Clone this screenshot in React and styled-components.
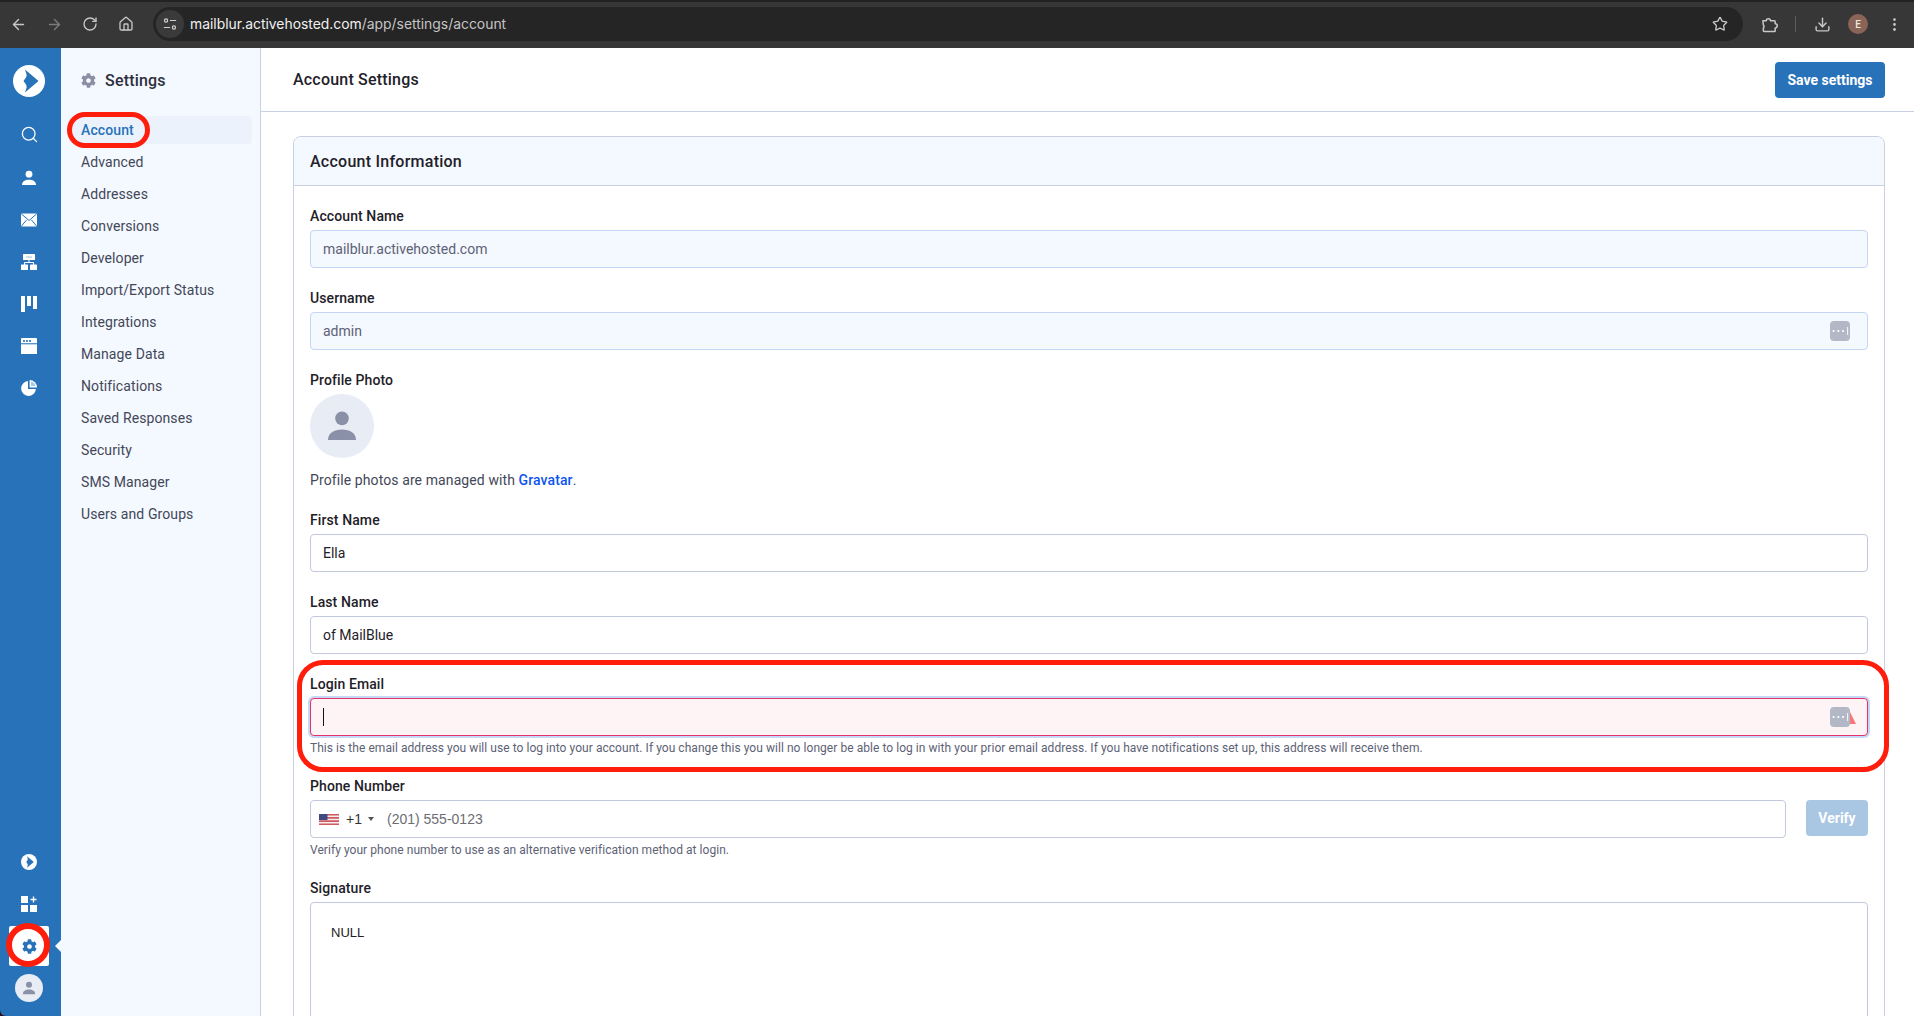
import React from 'react';
import styled, { createGlobalStyle } from 'styled-components';
import { ArrowLeft, ArrowRight, RotateCw, Home, Star, Download, EllipsisVertical, Search } from 'lucide-react';
import { FaCog } from 'react-icons/fa';

const GlobalStyle = createGlobalStyle`
  * { box-sizing: border-box; }
  html, body { margin: 0; padding: 0; height: 100%; overflow: hidden; }
  body { font-family: "Roboto", "Liberation Sans", sans-serif; color: #1f2129; background: #fff; }
`;

const Page = styled.div`
  height: 1016px;
  display: flex;
  flex-direction: column;
  overflow: hidden;
  background: #2a0d16;
`;

const Toolbar = styled.div`
  height: 48px;
  flex-shrink: 0;
  display: flex;
  align-items: center;
  padding-bottom: 2px;
  background: #373737;
  border-top: 2px solid #222;
  color: #c7c7c7;
`;

const ToolSlot = styled.div`
  width: ${p => p.w || 36}px;
  height: 32px;
  display: flex;
  align-items: center;
  justify-content: center;
  flex-shrink: 0;
  color: ${p => (p.dim ? '#7c7c7c' : '#c7c7c7')};
`;

const AddressBar = styled.div`
  width: 1590px;
  height: 34px;
  margin-left: 9px;
  margin-right: 8px;
  border-radius: 17px;
  background: #252525;
  display: flex;
  align-items: center;
  padding: 0 15px 0 3px;
  flex-shrink: 0;
`;

const SiteChip = styled.div`
  width: 28px;
  height: 28px;
  border-radius: 50%;
  background: #3a3a3a;
  display: flex;
  align-items: center;
  justify-content: center;
  margin-right: 6px;
`;

const Url = styled.div`
  flex: 1;
  font-family: "Inter", sans-serif;
  font-size: 13.9px;
  color: #c4c4c4;
  span { color: #f1f1f1; }
`;

const ToolDivider = styled.div`
  width: 1px;
  height: 16px;
  background: #5c5c5c;
  margin: 0 8px;
`;

const ProfileDot = styled.div`
  width: 20px;
  height: 20px;
  border-radius: 50%;
  background: #8a6557;
  color: #efe7e3;
  font-size: 10px;
  font-weight: 500;
  display: flex;
  align-items: center;
  justify-content: center;
`;

const Body = styled.div`
  flex: 1;
  min-height: 0;
  display: flex;
`;

const Rail = styled.nav`
  width: 61px;
  flex-shrink: 0;
  background: #2772b8;
  border-bottom-left-radius: 6px;
  display: flex;
  flex-direction: column;
  align-items: center;
  padding: 17px 0 14px;
`;

const RailLogo = styled.div`
  width: 32px;
  height: 32px;
  margin-bottom: 18px;
  margin-right: 3px;
`;

const RailSlot = styled.div`
  height: 42px;
  width: 100%;
  display: flex;
  align-items: center;
  justify-content: center;
  color: #fff;
  padding-right: 3px;
`;

const SearchSlot = styled(RailSlot)`
  padding-bottom: 3px;
`;

const RailBottom = styled.div`
  margin-top: auto;
  width: 100%;
  display: flex;
  flex-direction: column;
  align-items: center;
`;

const GearBox = styled.div`
  position: relative;
  width: 40px;
  height: 40px;
  margin-top: 1px;
  margin-left: -3px;
  border-radius: 2px;
  background: #fff;
  color: #2772b8;
  display: flex;
  align-items: center;
  justify-content: center;
`;

const GearPointer = styled.div`
  position: absolute;
  left: 46px;
  top: 14px;
  width: 0;
  height: 0;
  border-top: 6px solid transparent;
  border-bottom: 6px solid transparent;
  border-right: 6px solid #f4f8ff;
`;

const GearRing = styled.div`
  position: absolute;
  left: -3px;
  top: -3px;
  width: 44px;
  height: 44px;
  border-radius: 50%;
  border: 6.5px solid #ff1d0c;
`;

const RailAvatar = styled.div`
  width: 28px;
  height: 28px;
  border-radius: 50%;
  margin-top: 8px;
  margin-right: 3px;
  background: #e8ecf5;
  display: flex;
  align-items: center;
  justify-content: center;
`;

const SubNav = styled.aside`
  width: 200px;
  flex-shrink: 0;
  background: #f4f8ff;
  border-right: 1px solid #c9d0e3;
  padding: 0 8px;
`;

const SubNavHead = styled.div`
  height: 64px;
  margin-bottom: 4px;
  padding-left: 12px;
  display: flex;
  align-items: center;
  gap: 9px;
  font-size: 16px;
  font-weight: 500;
  letter-spacing: 0.2px;
  color: #2d303b;
  svg { color: #8a90a3; }
`;

const NavList = styled.div`
  display: flex;
  flex-direction: column;
  gap: 4px;
`;

const NavItem = styled.div`
  position: relative;
  height: 28px;
  padding-left: 12px;
  border-radius: 4px;
  display: flex;
  align-items: center;
  font-size: 14px;
  letter-spacing: 0.1px;
  color: ${p => (p.active ? '#2772b8' : '#434757')};
  font-weight: ${p => (p.active ? 500 : 400)};
  background: ${p => (p.active ? '#ecf2fc' : 'transparent')};
`;

const NavRing = styled.div`
  position: absolute;
  left: -2px;
  top: -4px;
  width: 83px;
  height: 36px;
  border: 5px solid #ff1d0c;
  border-radius: 18px;
`;

const Main = styled.main`
  flex: 1;
  min-width: 0;
  background: #fff;
`;

const MainHead = styled.header`
  height: 64px;
  padding: 0 29px 0 32px;
  border-bottom: 1px solid #c9d0e3;
  display: flex;
  align-items: center;
  justify-content: space-between;
  font-size: 16px;
  font-weight: 500;
  letter-spacing: 0.2px;
  color: #1f2129;
`;

const SaveButton = styled.button`
  width: 110px;
  height: 36px;
  border: none;
  border-radius: 4px;
  background: #2772b8;
  color: #fff;
  font-family: inherit;
  font-size: 14px;
  font-weight: 700;
  margin-top: 1px;
`;

const Content = styled.div`
  padding: 24px 29px 0 32px;
`;

const Card = styled.section`
  border: 1px solid #c9d0e3;
  border-radius: 8px;
`;

const CardHead = styled.div`
  height: 49px;
  padding: 0 16px;
  background: #f4f8ff;
  border-bottom: 1px solid #c9d0e3;
  border-radius: 8px 8px 0 0;
  display: flex;
  align-items: center;
  font-size: 16px;
  font-weight: 500;
  letter-spacing: 0.25px;
  color: #1f2129;
`;

const CardBody = styled.div`
  padding: 20px 16px;
  display: flex;
  flex-direction: column;
  gap: 20px;
`;

const Field = styled.div`
  position: relative;
`;

const Label = styled.div`
  height: 20px;
  line-height: 20px;
  margin-bottom: 4px;
  font-size: 14px;
  font-weight: 500;
  letter-spacing: 0.1px;
  color: #1f2129;
`;

const InputBox = styled.div`
  position: relative;
  height: 38px;
  padding: 0 12px;
  border-radius: 4px;
  display: flex;
  align-items: center;
  font-size: 14px;
  border: 1px solid ${p => (p.muted ? '#c5d6f5' : '#c3c9dc')};
  background: ${p => (p.muted ? '#f4f8ff' : '#fff')};
  color: ${p => (p.muted ? '#5d6275' : '#1f2129')};
`;

const ErrorBox = styled(InputBox)`
  border: 1px solid #e4336a;
  background: #fff4f5;
  box-shadow: 0 0 0 2px #c6d8f7;
`;

const Caret = styled.div`
  width: 1px;
  height: 18px;
  background: #111;
`;

const PasswordKey = styled.div`
  position: absolute;
  right: 17px;
  top: 8px;
  width: 20px;
  height: 20px;
  border-radius: 4px;
  background: #b3b8c6;
  color: #fff;
  display: flex;
  align-items: center;
  justify-content: center;
`;

const WarnMark = styled.div`
  position: absolute;
  right: 11px;
  top: 13px;
  width: 0;
  height: 0;
  border-left: 6px solid transparent;
  border-right: 6px solid transparent;
  border-bottom: 12px solid #f5787a;
`;

const Hint = styled.div`
  margin-top: 4px;
  height: 16px;
  line-height: 16px;
  font-size: 12px;
  letter-spacing: 0.05px;
  color: #5d6275;
`;

const EmailRing = styled.div`
  position: absolute;
  left: -13px;
  right: -21px;
  top: -14px;
  height: 112px;
  border: 5px solid #ff1d0c;
  border-radius: 26px;
  pointer-events: none;
`;

const Avatar = styled.div`
  width: 64px;
  height: 64px;
  border-radius: 50%;
  background: #e8ecf5;
  display: flex;
  align-items: center;
  justify-content: center;
`;

const PhotoNote = styled.div`
  margin-top: 12px;
  height: 20px;
  line-height: 20px;
  font-size: 14px;
  letter-spacing: 0.1px;
  color: #434757;
  a { color: #0f54ef; font-weight: 500; text-decoration: none; }
`;

const PhoneRow = styled.div`
  display: flex;
  gap: 20px;
`;

const PhoneInput = styled(InputBox)`
  flex: 1;
  padding: 0 8px;
  font-family: "Liberation Sans", sans-serif;
  color: #6d6d74;
`;

const DialCode = styled.span`
  color: #333;
  margin: 0 6px 0 7px;
`;

const DialCaret = styled.span`
  width: 0;
  height: 0;
  margin-right: 13px;
  border-left: 3px solid transparent;
  border-right: 3px solid transparent;
  border-top: 4px solid #555;
`;

const VerifyButton = styled.button`
  width: 62px;
  height: 36px;
  border: none;
  border-radius: 4px;
  background: #a9c6e3;
  color: #fff;
  font-family: inherit;
  font-size: 14px;
  font-weight: 700;
`;

const Signature = styled.div`
  height: 260px;
  padding: 22px 20px;
  border: 1px solid #c3c9dc;
  border-radius: 4px;
  font-family: "Liberation Sans", sans-serif;
  font-size: 13px;
  color: #222;
`;

const navItems = ['Account', 'Advanced', 'Addresses', 'Conversions', 'Developer', 'Import/Export Status', 'Integrations', 'Manage Data', 'Notifications', 'Saved Responses', 'Security', 'SMS Manager', 'Users and Groups'];

const LogoMark = ({ size = 32 }) => (
  <svg viewBox="0 0 32 32" width={size} height={size} style={{ display: 'block' }}>
    <circle cx="16" cy="16" r="16" fill="#fff" />
    <path d="M12 4.5 L25.5 16 L12 27.5 C13 24 14.5 22 13 19.5 L10.5 16 L13 12.5 C14.5 10 13 8 12 4.5Z" fill="#2772b8" />
  </svg>
);

const PersonIcon = ({ size = 16, color = 'currentColor' }) => (
  <svg viewBox="0 0 16 16" width={size} height={size} fill={color}>
    <circle cx="8" cy="4.2" r="3.4" />
    <path d="M1 15c0-3.4 3-5.2 7-5.2s7 1.8 7 5.2z" />
  </svg>
);

const MailIcon = () => (
  <svg viewBox="0 0 16 14" width="16" height="14">
    <rect y="0.5" width="16" height="13" rx="1" fill="#fff" />
    <path d="M0.5 1l7.5 6.5L15.5 1M0.5 13l5-6M15.5 13l-5-6" fill="none" stroke="#2772b8" strokeWidth="1" />
  </svg>
);

const OrgIcon = () => (
  <svg viewBox="0 0 16 16" width="16" height="16">
    <rect x="2" y="0" width="12" height="6" rx="0.6" fill="#fff" />
    <rect x="5" y="2.5" width="6" height="1" fill="#9cc0e4" />
    <path d="M8 6v3M3.5 11V8.5h9V11" fill="none" stroke="#fff" strokeWidth="1" />
    <rect x="0" y="10.5" width="7" height="5.5" rx="0.6" fill="#fff" />
    <rect x="9" y="10.5" width="7" height="5.5" rx="0.6" fill="#fff" />
  </svg>
);

const BoardIcon = () => (
  <svg viewBox="0 0 16 16" width="16" height="16" fill="#fff">
    <rect x="0" y="0" width="4" height="16" />
    <rect x="6" y="0" width="4" height="10" />
    <rect x="12" y="0" width="4" height="13" />
  </svg>
);

const PagesIcon = () => (
  <svg viewBox="0 0 16 16" width="16" height="16">
    <path d="M0 1a1 1 0 0 1 1-1h14a1 1 0 0 1 1 1v4.3H0z" fill="#fff" />
    <path d="M0 6.3h16V16H0z" fill="#fff" />
    <rect x="2" y="2.2" width="2" height="1.6" fill="#2772b8" />
    <rect x="5" y="2.2" width="2" height="1.6" fill="#2772b8" />
    <rect x="8" y="2.2" width="2" height="1.6" fill="#2772b8" />
  </svg>
);

const PieIcon = () => (
  <svg viewBox="0 0 16 16" width="16" height="16" fill="#fff">
    <path d="M7 1.1A7.4 7.4 0 1 0 14.9 9H7z" />
    <path d="M8.6 0A7.4 7.4 0 0 1 16 7.4H8.6z" />
    <path d="M10 1.6A6 6 0 0 1 14.4 6H10z" fill="#a9c8e6" />
  </svg>
);

const AppsIcon = () => (
  <svg viewBox="0 0 16 16" width="16" height="16" fill="#fff">
    <rect x="0" y="0" width="7" height="7" />
    <rect x="0" y="9" width="7" height="7" />
    <rect x="9" y="9" width="7" height="7" />
    <path d="M11.8 0.5h1.4v2.3h2.3v1.4h-2.3v2.3h-1.4V4.2H9.5V2.8h2.3z" />
  </svg>
);

const SiteInfoIcon = () => (
  <svg viewBox="0 0 16 16" width="14" height="14" fill="none" stroke="#d0d0d0" strokeWidth="1.4">
    <circle cx="3.5" cy="4" r="1.8" />
    <path d="M8 4h7M1 12h7" />
    <circle cx="12.5" cy="12" r="1.8" />
  </svg>
);

const ExtensionIcon = () => (
  <svg viewBox="0 0 18 18" width="17" height="17" fill="none" stroke="currentColor" strokeWidth="1.6" strokeLinejoin="round">
    <path d="M2 5h3.6a2.2 2.2 0 0 1 4.4 0H14.2a.8.8 0 0 1 .8.8v2.4a2.2 2.2 0 0 1 0 4.4V16a.5.5 0 0 1-.5.5H3.5A1 1 0 0 1 2.5 15.5V12.6a2.2 2.2 0 0 0 0-3.2z" />
  </svg>
);

const FlagIcon = () => (
  <svg viewBox="0 0 20 11" width="20" height="11">
    <rect width="20" height="11" fill="#f3eeee" />
    <path d="M0 0h20v1.6H0zM0 3.1h20v1.6H0zM0 6.3h20v1.6H0zM0 9.4h20V11H0z" fill="#cf5a5f" />
    <rect width="8.5" height="6" fill="#3f4a80" />
  </svg>
);

const KeyDots = () => (
  <svg viewBox="0 0 20 20" width="20" height="20" fill="#fff">
    <circle cx="3.6" cy="10" r="1.1" />
    <circle cx="8.3" cy="10" r="1.1" />
    <circle cx="13" cy="10" r="1.1" />
    <rect x="17.2" y="6" width="0.9" height="8" />
  </svg>
);

function App() {
  return (
    <>
      <GlobalStyle />
      <Page>
        <Toolbar>
          <ToolSlot><ArrowLeft size={17} /></ToolSlot>
          <ToolSlot dim><ArrowRight size={17} /></ToolSlot>
          <ToolSlot><RotateCw size={16} /></ToolSlot>
          <ToolSlot><Home size={16} /></ToolSlot>
          <AddressBar>
            <SiteChip><SiteInfoIcon /></SiteChip>
            <Url><span>mailblur.activehosted.com</span>/app/settings/account</Url>
            <Star size={16} />
          </AddressBar>
          <ToolSlot><ExtensionIcon /></ToolSlot>
          <ToolDivider />
          <ToolSlot><Download size={17} /></ToolSlot>
          <ToolSlot w={36}><ProfileDot>E</ProfileDot></ToolSlot>
          <ToolSlot><EllipsisVertical size={17} /></ToolSlot>
        </Toolbar>
        <Body>
          <Rail>
            <RailLogo><LogoMark /></RailLogo>
            <SearchSlot><Search size={19} strokeWidth={1.6} /></SearchSlot>
            <RailSlot><PersonIcon /></RailSlot>
            <RailSlot><MailIcon /></RailSlot>
            <RailSlot><OrgIcon /></RailSlot>
            <RailSlot><BoardIcon /></RailSlot>
            <RailSlot><PagesIcon /></RailSlot>
            <RailSlot><PieIcon /></RailSlot>
            <RailBottom>
              <RailSlot><LogoMark size={16} /></RailSlot>
              <RailSlot><AppsIcon /></RailSlot>
              <GearBox>
                <FaCog size={15} />
                <GearPointer />
                <GearRing />
              </GearBox>
              <RailAvatar><PersonIcon size={14} color="#8a90a8" /></RailAvatar>
            </RailBottom>
          </Rail>
          <SubNav>
            <SubNavHead><FaCog size={15} />Settings</SubNavHead>
            <NavList>
              {navItems.map((item, i) => (
                <NavItem key={item} active={i === 0}>
                  {item}
                  {i === 0 && <NavRing />}
                </NavItem>
              ))}
            </NavList>
          </SubNav>
          <Main>
            <MainHead>
              Account Settings
              <SaveButton>Save settings</SaveButton>
            </MainHead>
            <Content>
              <Card>
                <CardHead>Account Information</CardHead>
                <CardBody>
                  <Field>
                    <Label>Account Name</Label>
                    <InputBox muted>mailblur.activehosted.com</InputBox>
                  </Field>
                  <Field>
                    <Label>Username</Label>
                    <InputBox muted>admin<PasswordKey><KeyDots /></PasswordKey></InputBox>
                  </Field>
                  <Field>
                    <Label>Profile Photo</Label>
                    <Avatar><PersonIcon size={32} color="#8a90a8" /></Avatar>
                    <PhotoNote>Profile photos are managed with <a href="#gravatar">Gravatar</a>.</PhotoNote>
                  </Field>
                  <Field>
                    <Label>First Name</Label>
                    <InputBox>Ella</InputBox>
                  </Field>
                  <Field>
                    <Label>Last Name</Label>
                    <InputBox>of MailBlue</InputBox>
                  </Field>
                  <Field>
                    <EmailRing />
                    <Label>Login Email</Label>
                    <ErrorBox>
                      <Caret />
                      <WarnMark />
                      <PasswordKey><KeyDots /></PasswordKey>
                    </ErrorBox>
                    <Hint>This is the email address you will use to log into your account. If you change this you will no longer be able to log in with your prior email address. If you have notifications set up, this address will receive them.</Hint>
                  </Field>
                  <Field>
                    <Label>Phone Number</Label>
                    <PhoneRow>
                      <PhoneInput>
                        <FlagIcon />
                        <DialCode>+1</DialCode>
                        <DialCaret />
                        (201) 555-0123
                      </PhoneInput>
                      <VerifyButton>Verify</VerifyButton>
                    </PhoneRow>
                    <Hint>Verify your phone number to use as an alternative verification method at login.</Hint>
                  </Field>
                  <Field>
                    <Label>Signature</Label>
                    <Signature>NULL</Signature>
                  </Field>
                </CardBody>
              </Card>
            </Content>
          </Main>
        </Body>
      </Page>
    </>
  );
}

export default App;
